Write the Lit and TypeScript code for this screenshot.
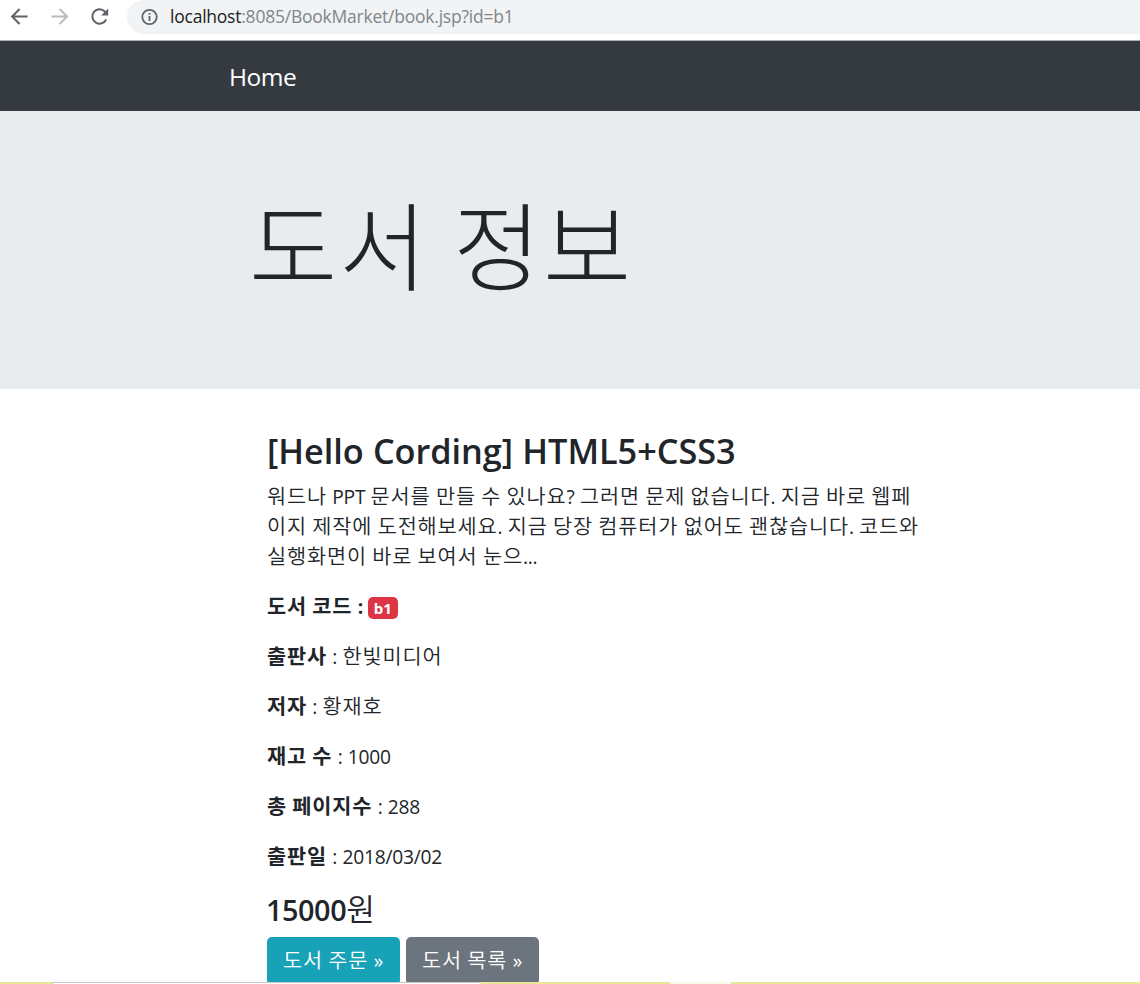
import { LitElement, html, css } from "lit";
import { customElement } from "lit/decorators.js";

// Hangul and Latin runs use different fonts and tracking.
const runs = (text: string) =>
  text
    .split(/([가-힣]+)/)
    .filter((part) => part !== "")
    .map((part) =>
      /[가-힣]/.test(part)
        ? html`<span class="ko">${part}</span>`
        : html`<span class="la">${part}</span>`
    );

const description = [
  "워드나 PPT 문서를 만들 수 있나요? 그러면 문제 없습니다. 지금 바로 웹페",
  "이지 제작에 도전해보세요. 지금 당장 컴퓨터가 없어도 괜찮습니다. 코드와",
  "실행화면이 바로 보여서 눈으...",
];

const details = [
  ["출판사", "한빛미디어"],
  ["저자", "황재호"],
  ["재고 수", "1000"],
  ["총 페이지수", "288"],
  ["출판일", "2018/03/02"],
];

@customElement("app-root")
export class AppRoot extends LitElement {
  static styles = css`
    :host {
      display: flex;
      flex-direction: column;
      height: 984px;
      overflow: hidden;
      background: #fff;
      color: #212529;
      font: 400 20px/30px "Open Sans", "Noto Sans CJK KR", sans-serif;
      white-space: pre;
    }
    * { box-sizing: border-box; }
    h1, h3, p { margin: 0; }
    .ko { font-family: "Noto Sans CJK KR", sans-serif; font-size: 1.04em; font-weight: 350; letter-spacing: 0.041em; line-height: 1; }
    .la { font-size: 0.96em; font-weight: 400; word-spacing: 0.03em; letter-spacing: -0.012em; line-height: 1; }
    b .ko, b .la { font-weight: 700; }
    .toolbar { flex: none; display: flex; height: 41px; border-bottom: 1px solid #b5afb1; }
    .tools { flex: none; display: flex; width: 127px; padding: 5px 0 0 8px; gap: 16px; }
    .tools svg { flex: none; width: 24px; height: 24px; }
    .address {
      flex: 1; display: flex; align-items: center; height: 34px; padding: 0 0 1px 14px; gap: 11px;
      background: #f1f3f4; border-radius: 17px 0 0 17px; color: #80868b;
      font-size: 17.5px; letter-spacing: -0.23px;
    }
    .address svg { flex: none; width: 18px; height: 18px; }
    .url { padding-bottom: 2px; }
    .host { color: #202124; }
    .navbar { flex: none; display: flex; align-items: center; height: 70px; padding: 2px 0 0 229px; background: #343a40; color: #fff; font-size: 24.5px; letter-spacing: -0.5px; }
    .jumbo { flex: none; height: 278px; padding: 83px 0 0 249px; background: #e9ecef; }
    .jumbo h1 { font-size: 90px; font-weight: 300; line-height: 108px; }
    .jumbo .ko { font-size: 1.065em; font-weight: 300; letter-spacing: 0.019em; }
    .content { flex: 1; min-height: 0; overflow: hidden; padding: 41px 0 0 267px; }
    .title { font-size: 35px; font-weight: 600; line-height: 42px; margin-bottom: 10px; }
    .title .la { font-size: 0.98em; font-weight: 600; letter-spacing: -0.001em; word-spacing: 0.01em; }
    .line { height: 30px; }
    .row { height: 30px; margin-top: 20px; display: flex; align-items: baseline; }
    .badge { align-self: center; margin: 1px 0 0 5px; width: 30px; height: 22px; border-radius: 5px; background: #dc3545; color: #fff; font-size: 15px; font-weight: 700; line-height: 22px; text-align: center; }
    .price { height: 36px; margin: 20px 0 9px -1px; font-size: 30px; line-height: 36px; }
    .price .la { font-weight: 600; letter-spacing: -0.015em; }
    .buttons { display: flex; gap: 6px; }
    .btn { width: 133px; height: 48px; padding: 9px 0 0 16px; border-radius: 5px; color: #fff; background: #17a2b8; }
    .btn.grey { background: #6c757d; }
    .strip { flex: none; display: flex; height: 2px; background: #e8e898; }
    .panel { width: 429px; margin-left: 52px; border-top: 1px solid #c8c8c8; border-left: 1px solid #c8c8c8; background: #fff; }
    .light { width: 61px; margin-left: 189px; background: #fafae8; }
  `;

  render() {
    return html`<div class="toolbar"
        ><div class="tools"
          ><svg viewBox="0 0 24 24" fill="none" stroke="#5f6368" stroke-width="2"><path d="M19.6 11.5H4.6M11.6 4l-7.5 7.5L11.6 19" /></svg
          ><svg viewBox="0 0 24 24" fill="none" stroke="#babcbe" stroke-width="2"><path d="M3.5 11.5H19M11.6 4l7.5 7.5L11.6 19" /></svg
          ><svg viewBox="0 0 24 24" fill="none" stroke="#5f6368" stroke-width="2"><path d="M18.2 14.3A7.2 7.2 0 1 1 16.8 6.5L19 8.7" /><path d="M20.2 3.5V10.5H13.2Z" fill="#5f6368" stroke="none" /></svg
        ></div
        ><div class="address"
          ><svg viewBox="0 0 18 18" fill="none" stroke="#5f6368" stroke-width="1.8"><circle cx="8.5" cy="9" r="7.2" /><path d="M8.5 8v5M8.5 5v1.8" /></svg
          ><span class="url"><span class="host">localhost</span>:8085/BookMarket/book.jsp?id=b1</span
        ></div
      ></div
      ><nav class="navbar">Home</nav
      ><header class="jumbo"><h1>${runs("도서 정보")}</h1></header
      ><main class="content"
        ><h3 class="title">${runs("[Hello Cording] HTML5+CSS3")}</h3
        >${description.map((line) => html`<p class="line">${runs(line)}</p>`)}<p class="row"><b>${runs("도서 코드 :")}</b><span class="badge">b1</span></p
        >${details.map(([label, value]) => html`<p class="row"><b>${runs(label)}</b><span>${runs(` : ${value}`)}</span></p>`)}<h3 class="price">${runs("15000원")}</h3
        ><div class="buttons"><div class="btn">${runs("도서 주문 »")}</div><div class="btn grey">${runs("도서 목록 »")}</div></div
      ></main
      ><div class="strip"><div class="panel"></div><div class="light"></div></div>`;
  }
}
